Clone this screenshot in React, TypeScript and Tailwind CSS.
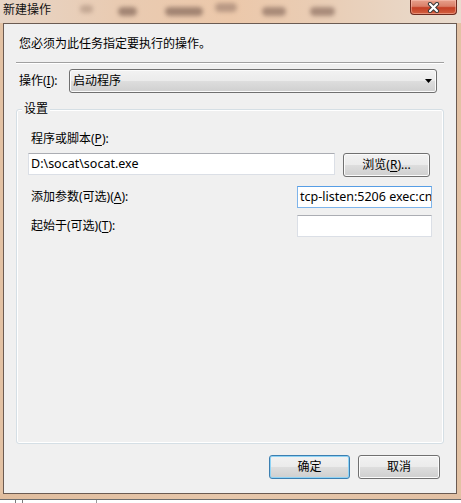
import React from 'react';

const Key = ({ k }: { k: string }) => <span className="underline underline-offset-[2px]">{k}</span>;

const WinButton = ({ children, focused, className }: { children: React.ReactNode; focused?: boolean; className: string }) => (
  <div
    className={`flex h-[24px] items-center justify-center rounded-[3px] border bg-[linear-gradient(#f2f2f2_0%,#ebebeb_48%,#dddddd_52%,#cfcfcf_100%)] ${
      focused
        ? 'border-[#3c7fb1] shadow-[inset_0_0_0_1px_#8fd3f5]'
        : 'border-[#707070] shadow-[inset_0_0_0_1px_#fbfbfb]'
    } ${className}`}
  >
    {children}
  </div>
);

const TextBox = ({ value, focused, className }: { value: string; focused?: boolean; className: string }) => (
  <div
    className={`flex h-[22px] items-center overflow-hidden whitespace-nowrap border bg-white pl-[2px] text-[12.5px] ${
      focused ? 'border-[#7eb4ea] border-t-[#569de5]' : 'border-[#dbdfe6] border-t-[#abadb3]'
    } ${className}`}
  >
    {value}
  </div>
);

const CloseButton = () => (
  <div className="ml-auto mr-[4px] flex h-[15px] w-[47px] items-center justify-center rounded-b-[4px] border border-t-0 border-[#6e2a1e] bg-[linear-gradient(#e7a08c_0%,#da7f68_45%,#c43f25_55%,#d3603f_100%)] shadow-[inset_0_0_0_1px_rgba(255,205,190,0.45)]">
    <svg width="13" height="11" viewBox="0 0 13 11">
      <path d="M3 2 L10 9 M10 2 L3 9" stroke="#3b3b3b" strokeWidth="4.2" strokeLinecap="round" />
      <path d="M3 2 L10 9 M10 2 L3 9" stroke="#ffffff" strokeWidth="2.2" strokeLinecap="round" />
    </svg>
  </div>
);

export default function App() {
  return (
    <div className="flex h-[503px] w-[461px] flex-col overflow-hidden bg-[#e3c2a4] font-['Noto_Sans','Noto_Sans_CJK_SC',sans-serif] text-[12px] leading-[16px] text-black">
      {/* title bar */}
      <div className="flex h-[23px] items-start bg-[linear-gradient(90deg,#e7d5c6_0%,#e9cbb2_25%,#ecc8aa_50%,#e9cdb5_70%,#e9dccf_100%)]">
        <span className="ml-[3px] mt-[2px] w-[48px] text-[#111]">新建操作</span>
        <div className="mt-[5px] flex items-start">
          <span className="ml-[29px] h-[8px] w-[13px] rounded-full bg-[#a08472]/50 blur-[2px]" />
          <span className="ml-[25px] mt-[2px] h-[9px] w-[19px] rounded-full bg-[#85685a]/70 blur-[2px]" />
          <span className="ml-[28px] mt-[2px] h-[9px] w-[38px] rounded-full bg-[#85685a]/70 blur-[2px]" />
          <span className="ml-[12px] mt-[-2px] h-[9px] w-[22px] rounded-full bg-[#97796a]/60 blur-[2px]" />
          <span className="ml-[25px] mt-[2px] h-[9px] w-[24px] rounded-full bg-[#85685a]/65 blur-[2px]" />
          <span className="ml-[24px] mt-[2px] h-[9px] w-[25px] rounded-full bg-[#85685a]/65 blur-[2px]" />
        </div>
        <CloseButton />
      </div>

      {/* client area */}
      <div className="ml-[3px] flex h-[471px] w-[454px] flex-col border border-[#6b5b52] bg-[#f0f0f0] px-[12px]">
        <p className="mt-[12px] pl-[3px]">您必须为此任务指定要执行的操作。</p>

        <div className="mt-[10px] h-[2px] border-t border-b border-t-[#a0a0a0] border-b-white" />

        <div className="mt-[5px] flex h-[24px] items-center">
          <span className="w-[53px] pl-[3px]">
            操作(<Key k="I" />):
          </span>
          <div className="flex h-[24px] w-[368px] items-center justify-between rounded-[3px] border border-[#707070] bg-[linear-gradient(#f2f2f2_0%,#ebebeb_48%,#dddddd_52%,#cfcfcf_100%)] pl-[3px] pr-[4px] shadow-[inset_0_0_0_1px_#fbfbfb]">
            <span>启动程序</span>
            <svg width="7" height="4" viewBox="0 0 7 4">
              <polygon points="0,0 7,0 3.5,4" fill="#000" />
            </svg>
          </div>
        </div>

        {/* settings group */}
        <div className="relative mt-[16px] flex h-[335px] flex-col rounded-[3px] border border-[#d5dfe5] px-[11px] shadow-[inset_0_0_0_1px_#ffffff]">
          <span className="absolute left-[5px] top-[-9px] bg-[#f0f0f0] px-[2px]">设置</span>

          <p className="mt-[21px] pl-[3px]">
            程序或脚本(<Key k="P" />):
          </p>
          <div className="mt-[6px] flex items-start gap-[8px]">
            <TextBox value="D:\socat\socat.exe" className="w-[307px]" />
            <WinButton className="w-[87px]">
              浏览(<Key k="R" />)...
            </WinButton>
          </div>

          <div className="mt-[9px] flex items-center">
            <span className="flex-1 pl-[3px]">
              添加参数(可选)(<Key k="A" />):
            </span>
            <TextBox value="tcp-listen:5206 exec:cn" focused className="w-[135px]" />
          </div>

          <div className="mt-[7px] flex items-center">
            <span className="flex-1 pl-[3px]">
              起始于(可选)(<Key k="T" />):
            </span>
            <TextBox value="" className="w-[135px]" />
          </div>
        </div>

        <div className="mt-[11px] flex justify-end gap-[8px] pr-[4px]">
          <WinButton focused className="w-[81px]">
            确定
          </WinButton>
          <WinButton className="w-[82px]">取消</WinButton>
        </div>
      </div>

      {/* bottom frame edge and window behind */}
      <div className="h-[5px] bg-[linear-gradient(90deg,#e0bd9e_0%,#e6c7ab_50%,#e2c0a3_100%)]" />
      <div className="h-px bg-[#6d6d6d]" />
      <div className="flex h-[3px] bg-white">
        <span className="ml-[15px] w-px bg-[#7a7a7a]" />
        <span className="ml-[6px] w-px bg-[#7a7a7a]" />
        <span className="ml-[73px] w-px bg-[#9a9a9a]" />
      </div>
    </div>
  );
}
